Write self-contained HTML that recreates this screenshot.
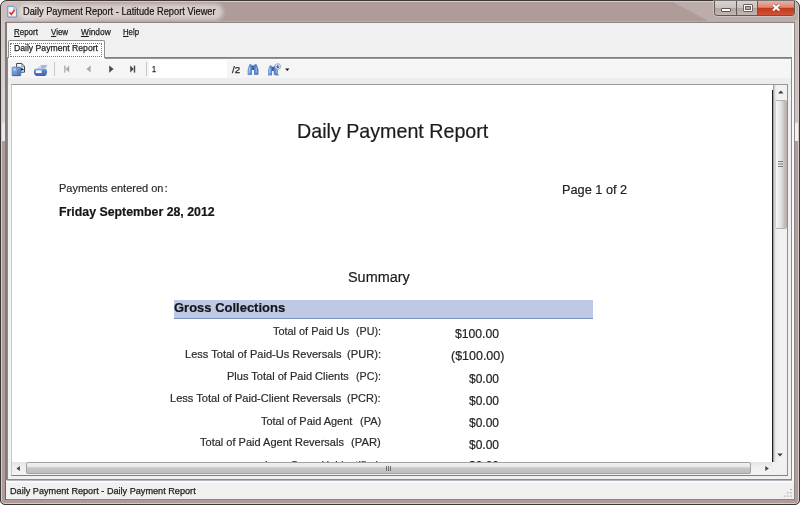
<!DOCTYPE html>
<html><head><meta charset="utf-8">
<style>
html,body{margin:0;padding:0;}
body{width:800px;height:505px;overflow:hidden;background:#fff;font-family:"Liberation Sans",sans-serif;position:relative;}
.abs{position:absolute;}
.t{position:absolute;white-space:pre;line-height:1;transform-origin:0 0;}
.ui{-webkit-text-stroke:.25px currentColor;filter:blur(.3px);}
.rp{-webkit-text-stroke:.2px currentColor;filter:blur(.3px);}
u{text-decoration:underline;text-underline-offset:1px;}
#frame{left:0;top:0;width:800px;height:505px;background:#af9c99;border-radius:7px 7px 5px 5px;overflow:hidden;}
#frameedge{left:0;top:0;width:798px;height:503px;border:1px solid #3c3836;border-radius:7px 7px 5px 5px;box-shadow:inset 0 0 0 1px #d6cbc8;}
#client{left:7px;top:23px;width:787px;height:476px;background:#f0f0f0;box-shadow:0 0 0 1px #8a8685,0 -1px 0 1px #b9aaa6;}
</style></head>
<body>
<div class="abs" id="frame">
  <svg class="abs" id="glass" style="left:0;top:0" width="800" height="23" viewBox="0 0 800 23"><path d="M669 0H800V23H712z" fill="#fff" fill-opacity=".17"/></svg>
  <div class="abs" style="left:0;top:0;width:70px;height:22px;background:linear-gradient(90deg,rgba(255,255,255,.38),rgba(255,255,255,.3) 35%,rgba(255,255,255,0));"></div>
  <div class="abs" id="glow" style="left:19px;top:3.500px;width:204px;height:16px;border-radius:8px;background:rgba(255,255,255,.5);filter:blur(2px);"></div>
</div>
<div class="abs" style="left:1px;top:20px;width:5px;height:121px;background:linear-gradient(#cfc6c4,#d8d4d3 60%,#d8d5d4 84%,#eaeaea 86%,#eaeaea);"></div>
<div class="abs" style="left:795px;top:20px;width:3px;height:121px;background:linear-gradient(#c8bcb9,#cdc3c0 84%,#f2f0f0 86%,#f2f0f0);"></div>
<div class="abs" id="frameedge"></div>

<!-- title icon -->
<svg class="abs" style="left:6px;top:4px" width="13" height="15" viewBox="0 0 13 15">
  <path d="M1.8 2.3h6l2.6 2.6v8.1h-8.6z" fill="#eef3fa" stroke="#6f8fc0" stroke-width="1"/>
  <path d="M7.6 2.5v2.6h2.6" fill="#cfdcf0" stroke="#8aa3cf" stroke-width=".6"/>
  <path d="M3.6 8.2l1.8 2.2l3.2-4.6" fill="none" stroke="#d8321c" stroke-width="1.6"/>
</svg>

<!-- caption buttons -->
<div class="abs" id="capbtns" style="left:714px;top:1px;width:79px;height:14px;border:1px solid #615856;border-top:none;border-radius:0 0 4px 4px;overflow:hidden;box-shadow:0 0 0 1px rgba(255,255,255,.3);">
  <div class="abs" style="left:0;top:0;width:21px;height:14px;background:linear-gradient(#dad2d0,#cbc1be 48%,#b3a5a1 52%,#c2b6b3);border-right:1px solid #615856;"></div>
  <div class="abs" style="left:22px;top:0;width:20px;height:14px;background:linear-gradient(#dad2d0,#cbc1be 48%,#b3a5a1 52%,#c2b6b3);border-right:1px solid #615856;"></div>
  <div class="abs" style="left:43px;top:0;width:37px;height:14px;background:linear-gradient(#e9b2a4,#dd8672 45%,#c6381b 52%,#cf5238 100%);"></div>
  <div class="abs" style="left:6px;top:7px;width:10px;height:4px;background:#fff;border:1px solid #5b5553;box-sizing:border-box;border-radius:1px;"></div>
  <div class="abs" style="left:28px;top:3px;width:10px;height:8px;border:1px solid #6b6563;background:#fff;box-sizing:border-box;border-radius:1px;"></div>
  <div class="abs" style="left:30px;top:5px;width:6px;height:4px;border:1px solid #6b6563;background:#b3a5a1;box-sizing:border-box;"></div>
  <svg class="abs" style="left:55px;top:1px" width="14" height="12" viewBox="0 0 14 12"><path d="M3 2.700l6.300 5.800M9.300 2.700l-6.300 5.800" stroke="#7a4a40" stroke-width="3.200" stroke-linecap="butt" opacity=".7"/><path d="M3 2.700l6.300 5.800M9.300 2.700l-6.300 5.800" stroke="#fff" stroke-width="2" stroke-linecap="butt"/></svg>
</div>

<div class="abs" id="client"></div>

<!-- tab -->
<div class="abs" style="left:8px;top:40px;width:97px;height:19px;background:#fff;border:1px solid #8e8e8e;border-bottom:none;border-radius:2px 2px 0 0;box-sizing:border-box;"></div>

<!-- tab page / toolbar -->
<div class="abs" style="left:792px;top:24px;width:2px;height:475px;background:#fafafa;"></div>
<div class="abs" style="left:7px;top:57px;width:784.5px;height:423px;border:1px solid #8a8a8a;background:#f0f0f0;box-sizing:border-box;"></div>
<div class="abs" style="left:105px;top:57px;width:686.5px;height:2px;background:linear-gradient(#808080,#808080 60%,#b9b9b9);"></div>
<div class="abs" style="left:8px;top:59px;width:783px;height:19px;background:linear-gradient(#fbfbfb,#f5f5f5 2px);"></div>
<div class="abs" style="left:9px;top:57px;width:95px;height:2px;background:#fff;"></div>
<div class="abs" style="left:8px;top:78px;width:783px;height:6px;background:#ededed;"></div>
<div class="abs" style="left:5px;top:22px;width:2px;height:458px;background:#827c7a;"></div>
<div class="abs" style="left:10px;top:43px;width:92px;height:14px;border:1px dotted #777;box-sizing:border-box;"></div>

<!-- toolbar items -->
<div class="abs" style="left:54px;top:62px;width:1px;height:14px;background:#c9c9c9;"></div>
<div class="abs" style="left:146px;top:62px;width:1px;height:14px;background:#c9c9c9;"></div>
<div class="abs" style="left:149px;top:60px;width:78px;height:18px;background:#fff;"></div>
<svg class="abs" style="left:60px;top:62px" width="80" height="14" viewBox="0 0 80 14">
  <g fill="#a9a9a9"><rect x="4.2" y="3.6" width="1.3" height="7"/><path d="M9.2 3.6v7l-3.6-3.5z"/>
  <path d="M30.6 3.6v7l-4.2-3.5z"/></g>
  <g fill="#4a4a4a"><path d="M49.2 3.4v7.4l4.4-3.7z"/>
  <path d="M70.2 3.6v7l3.6-3.5z"/><rect x="73.8" y="3.6" width="1.4" height="7"/></g>
</svg>
<!-- export icon -->
<svg class="abs" style="left:11px;top:61px" width="16" height="16" viewBox="0 0 16 16">
  <defs><linearGradient id="eg" x1="0" y1="0" x2="1" y2="1"><stop offset="0" stop-color="#a9c5ec"/><stop offset=".55" stop-color="#5f8bd0"/><stop offset="1" stop-color="#4370bd"/></linearGradient></defs>
  <path d="M5.6 2.5h5.2l2.7 2.7v6h-7.9z" fill="#fcfcfd" stroke="#454545" stroke-width="1"/>
  <path d="M10.6 2.7v2.7h2.7" fill="none" stroke="#777" stroke-width=".7"/>
  <rect x="10.2" y="4.6" width="2.6" height="1.9" fill="#7fb2e6"/>
  <rect x="10.6" y="9.2" width="2.2" height="1.5" fill="#9cc4ec"/>
  <path d="M9.6 6.7l3.7 1.6l-3.7 1.6z" fill="#1c1c1c"/>
  <rect x="1.1" y="6.1" width="8.7" height="8.7" rx=".8" fill="url(#eg)" stroke="#4673bf" stroke-width=".7"/>
  <rect x="4.2" y="8" width="1.3" height="5.6" fill="#9a93a6"/>
  <rect x="2.4" y="7.4" width="2.6" height="2.2" fill="#c4d7f2" opacity=".8"/>
  <rect x="1.1" y="13.9" width="8.7" height=".9" fill="#3c6bb9"/>
</svg>
<!-- printer icon -->
<svg class="abs" style="left:33px;top:62.5px" width="16" height="14" viewBox="0 0 16 14">
  <defs><linearGradient id="pg" x1="0" y1="0" x2="0" y2="1"><stop offset="0" stop-color="#9dbbe8"/><stop offset=".3" stop-color="#5b86cf"/><stop offset="1" stop-color="#3f69b9"/></linearGradient></defs>
  <path d="M4.6 5.6l3.4-3.2h6l-2.2 3.4z" fill="#e4ebf7" stroke="#9fb2d6" stroke-width=".6"/>
  <path d="M8.6 3.1h4.6M7.6 4.2h4.6" stroke="#7f93c9" stroke-width=".9"/>
  <rect x="1" y="5.6" width="13" height="6.6" rx="2.2" fill="url(#pg)"/>
  <rect x="2.9" y="7.3" width="5.7" height="2.7" rx=".5" fill="#f7f9fd"/>
  <rect x="9.9" y="6.4" width="1.6" height="1.8" fill="#2cc540"/>
  <rect x="9.9" y="8.3" width="1.6" height="1.4" fill="#d9402e"/>
  <path d="M2.6 12.4h10" stroke="#3a5cae" stroke-width="1.1"/>
</svg>
<!-- binoculars -->
<svg class="abs" style="left:246px;top:62px" width="14" height="14" viewBox="0 0 14 14">
  <defs><linearGradient id="bg1" x1="0" y1="0" x2="1" y2="0"><stop offset="0" stop-color="#7aa3dc"/><stop offset=".35" stop-color="#5a86cc"/><stop offset=".5" stop-color="#2b50ae"/><stop offset=".65" stop-color="#5a86cc"/><stop offset="1" stop-color="#4674c2"/></linearGradient></defs>
  <path d="M1.6 7.4l1.2-3.6q.3-1.8 1.6-1.8q1.4 0 1.6 1.6h2q.2-1.6 1.6-1.6q1.300 0 1.600 1.800l1.200 3.600v4.600h-4.400v-4h-2v4h-4.400z" fill="url(#bg1)"/>
  <rect x="3" y="5.2" width="1.300" height="5.600" fill="#b4cdef" opacity=".85"/>
  <rect x="9.600" y="5.200" width="1.300" height="5.600" fill="#a5c1ea" opacity=".8"/>
  <path d="M1.600 12.400h4.400M8 12.400h4.400" stroke="#3a62b0" stroke-width=".8"/>
</svg>
<svg class="abs" style="left:267px;top:62px" width="16" height="14" viewBox="0 0 16 14">
  <path d="M1 8l1-3q.3-1.700 1.500-1.700q1.300 0 1.500 1.500h1.800q.2-1.500 1.500-1.500q1.200 0 1.500 1.700l1 3v4.800h-4v-3.800h-1.800v3.800h-4z" fill="url(#bg1)"/>
  <rect x="2.200" y="6" width="1.200" height="5.400" fill="#b9d0f0" opacity=".85"/>
  <rect x="8.800" y="7" width="1.200" height="4.400" fill="#a8c3ea" opacity=".8"/>
  <path d="M1 12.900h4M7.800 12.900h4" stroke="#3a62b0" stroke-width=".8"/>
  <circle cx="10.800" cy="4.500" r="2.800" fill="#f0f4fb" stroke="#8d94a3" stroke-width=".8"/>
  <path d="M10.800 2.800v2.400M9.500 4.600l1.300 1.500l1.300-1.500" stroke="#2f55b4" stroke-width="1" fill="#2f55b4"/>
</svg>
<svg class="abs" style="left:284px;top:67px" width="7" height="5" viewBox="0 0 7 5"><path d="M1.200 1.400h4.200l-2.100 2.500z" fill="#111"/></svg>

<!-- report viewer -->
<div class="abs" id="viewer" style="left:11px;top:84px;width:777px;height:392px;border:1px solid;border-color:#9a9a9a #909090 #808080 #cdc5c3;background:#fff;box-sizing:border-box;"></div>
<!-- page right edge -->
<div class="abs" style="left:771.7px;top:90px;width:1.8px;height:372px;background:#1e1e1e;"></div>
<!-- gross band -->
<div class="abs" style="left:174px;top:300px;width:419px;height:18px;background:#becae5;"></div>
<div class="abs" style="left:174px;top:318px;width:419px;height:1px;background:#7d93bd;"></div>

<!-- status -->
<div class="abs" style="left:5px;top:480px;width:1px;height:20px;background:#6a6462;"></div>
<div class="abs" style="left:6px;top:480px;width:788px;height:19px;background:linear-gradient(#f0f0f0 1px,#fbfbfb 1px,#fbfbfb 2px,#f0f0f0 3px);"></div>
<div class="abs" style="left:7px;top:480px;width:785px;height:1px;background:#b4b8c0;"></div>

<div class="t rp" style="left:23.40px;top:6.54px;font-size:10.0px;font-weight:normal;color:#15110f;transform:scaleX(0.9272);">Daily Payment Report - Latitude Report Viewer</div>
<div class="t ui" style="left:14.10px;top:27.26px;font-size:9.5px;font-weight:normal;color:#1b1b1b;transform:scaleX(0.8381);"><u>R</u>eport</div>
<div class="t ui" style="left:51.20px;top:27.26px;font-size:9.5px;font-weight:normal;color:#1b1b1b;transform:scaleX(0.8366);"><u>V</u>iew</div>
<div class="t ui" style="left:80.60px;top:27.26px;font-size:9.5px;font-weight:normal;color:#1b1b1b;transform:scaleX(0.8783);"><u>W</u>indow</div>
<div class="t ui" style="left:123.20px;top:27.26px;font-size:9.5px;font-weight:normal;color:#1b1b1b;transform:scaleX(0.8154);"><u>H</u>elp</div>
<div class="t ui" style="left:13.80px;top:43.36px;font-size:9.5px;font-weight:normal;color:#1b1b1b;transform:scaleX(0.9088);">Daily Payment Report</div>
<div class="t ui" style="left:10.00px;top:486.36px;font-size:9.5px;font-weight:normal;color:#1b1b1b;transform:scaleX(0.9608);">Daily Payment Report - Daily Payment Report</div>
<div class="t ui" style="left:151.50px;top:64.26px;font-size:9.5px;font-weight:normal;color:#1b1b1b;transform:scaleX(0.7600);">1</div>
<div class="t ui" style="left:231.50px;top:64.76px;font-size:9.5px;font-weight:normal;color:#1b1b1b;transform:scaleX(1.0341);">/2</div>
<div class="t rp" style="left:297.01px;top:121.84px;font-size:19.8px;font-weight:normal;color:#1c1c1c;transform:scaleX(0.9943);">Daily Payment Report</div>
<div class="t rp" style="left:59.00px;top:181.78px;font-size:11.6px;font-weight:normal;color:#2a2a2a;transform:scaleX(0.9475);">Payments entered on</div>
<div class="t rp" style="left:164.40px;top:181.78px;font-size:11.6px;font-weight:normal;color:#2a2a2a;transform:scaleX(1.0000);">:</div>
<div class="t rp" style="left:59.00px;top:206.25px;font-size:12.7px;font-weight:bold;color:#151515;transform:scaleX(0.9723);">Friday September 28, 2012</div>
<div class="t rp" style="left:561.86px;top:182.89px;font-size:13.6px;font-weight:normal;color:#222;transform:scaleX(0.9371);">Page 1 of 2</div>
<div class="t rp" style="left:348.00px;top:270.16px;font-size:14.7px;font-weight:normal;color:#1c1c1c;transform:scaleX(0.9812);">Summary</div>
<div class="t rp" style="left:173.70px;top:301.43px;font-size:13.2px;font-weight:bold;color:#151515;transform:scaleX(0.9847);">Gross Collections</div>
<div class="t rp" style="left:273.40px;top:326.45px;font-size:11.4px;font-weight:normal;color:#2a2a2a;transform:scaleX(0.9566);">Total of Paid Us</div>
<div class="t rp" style="left:355.70px;top:326.45px;font-size:11.4px;font-weight:normal;color:#2a2a2a;transform:scaleX(0.9428);">(PU):</div>
<div class="t rp" style="left:185.30px;top:348.75px;font-size:11.4px;font-weight:normal;color:#2a2a2a;transform:scaleX(0.9701);">Less Total of Paid-Us Reversals</div>
<div class="t rp" style="left:346.70px;top:348.75px;font-size:11.4px;font-weight:normal;color:#2a2a2a;transform:scaleX(0.9788);">(PUR):</div>
<div class="t rp" style="left:227.40px;top:370.95px;font-size:11.4px;font-weight:normal;color:#2a2a2a;transform:scaleX(0.9684);">Plus Total of Paid Clients</div>
<div class="t rp" style="left:355.80px;top:370.95px;font-size:11.4px;font-weight:normal;color:#2a2a2a;transform:scaleX(0.9390);">(PC):</div>
<div class="t rp" style="left:170.40px;top:393.25px;font-size:11.4px;font-weight:normal;color:#2a2a2a;transform:scaleX(0.9710);">Less Total of Paid-Client Reversals</div>
<div class="t rp" style="left:347.10px;top:393.25px;font-size:11.4px;font-weight:normal;color:#2a2a2a;transform:scaleX(0.9672);">(PCR):</div>
<div class="t rp" style="left:261.30px;top:416.25px;font-size:11.4px;font-weight:normal;color:#2a2a2a;transform:scaleX(0.9611);">Total of Paid Agent</div>
<div class="t rp" style="left:359.80px;top:416.25px;font-size:11.4px;font-weight:normal;color:#2a2a2a;transform:scaleX(0.9620);">(PA)</div>
<div class="t rp" style="left:200.20px;top:437.15px;font-size:11.4px;font-weight:normal;color:#2a2a2a;transform:scaleX(0.9671);">Total of Paid Agent Reversals</div>
<div class="t rp" style="left:351.10px;top:437.15px;font-size:11.4px;font-weight:normal;color:#2a2a2a;transform:scaleX(0.9879);">(PAR)</div>
<div class="t rp" style="left:264.50px;top:459.85px;font-size:11.4px;font-weight:normal;color:#2a2a2a;transform:scaleX(0.9280);">Less Gross UnIdentified</div>
<div class="t rp" style="left:454.80px;top:327.53px;font-size:12.6px;font-weight:normal;color:#222;transform:scaleX(0.9666);">$100.00</div>
<div class="t rp" style="left:450.70px;top:350.23px;font-size:12.6px;font-weight:normal;color:#222;transform:scaleX(0.9904);">($100.00)</div>
<div class="t rp" style="left:468.80px;top:372.53px;font-size:12.6px;font-weight:normal;color:#222;transform:scaleX(0.9520);">$0.00</div>
<div class="t rp" style="left:468.80px;top:394.63px;font-size:12.6px;font-weight:normal;color:#222;transform:scaleX(0.9520);">$0.00</div>
<div class="t rp" style="left:468.80px;top:416.83px;font-size:12.6px;font-weight:normal;color:#222;transform:scaleX(0.9520);">$0.00</div>
<div class="t rp" style="left:468.80px;top:438.53px;font-size:12.6px;font-weight:normal;color:#222;transform:scaleX(0.9520);">$0.00</div>
<div class="t rp" style="left:468.80px;top:459.83px;font-size:12.6px;font-weight:normal;color:#222;transform:scaleX(0.9520);">$0.00</div>

<!-- vertical scrollbar -->
<div class="abs" style="left:773.2px;top:85px;width:13.8px;height:377px;background:linear-gradient(90deg,#8e8e8e,#dedede 1.8px,#ededed 3px,#f2f2f2 40%,#f0f0f0);"></div>
<div class="abs" style="left:775px;top:100px;width:11.5px;height:129px;box-sizing:border-box;border:1px solid #b5aeac;border-left-color:#d0d0d0;border-radius:2px;background:linear-gradient(90deg,#f6f6f6 0%,#e6e6e6 40%,#d4d2d2 68%,#c7bdba 80%,#c4b8b5 100%);"></div>
<div class="abs" style="left:777.5px;top:161px;width:5px;height:1px;background:#7c7c7c;box-shadow:0 2.5px 0 #7c7c7c,0 5px 0 #7c7c7c;"></div>
<svg class="abs" style="left:777px;top:89px" width="8" height="6" viewBox="0 0 8 6"><path d="M1.1 4.6l2.7-3l2.7 3z" fill="#3c3c3c"/></svg>
<svg class="abs" style="left:776px;top:452px" width="8" height="6" viewBox="0 0 8 6"><path d="M1.3 1.6l2.7 3l2.7-3z" fill="#3c3c3c"/></svg>

<!-- horizontal scrollbar -->
<div class="abs" style="left:12px;top:462px;width:775px;height:13px;background:linear-gradient(#e4e4e4,#f0f0f0 40%,#f2f2f2);"></div>
<div class="abs" style="left:26px;top:462px;width:725px;height:12px;box-sizing:border-box;border:1px solid #a2a2a2;border-radius:2px;background:linear-gradient(#f0f0f0 0%,#e6e6e6 40%,#c6c6c6 48%,#bfbfbf 100%);"></div>
<div class="abs" style="left:386px;top:466px;width:1px;height:5px;background:#6e6e6e;box-shadow:2px 0 0 #6e6e6e,4px 0 0 #6e6e6e;"></div>
<svg class="abs" style="left:15px;top:464px" width="6" height="9" viewBox="0 0 6 9"><path d="M4.9 1.9v5l-3.5-2.5z" fill="#444"/></svg>
<svg class="abs" style="left:764px;top:464px" width="6" height="9" viewBox="0 0 6 9"><path d="M1.3 1.9v5l3.5-2.5z" fill="#444"/></svg>
<div class="abs" style="left:772px;top:462px;width:15px;height:13px;background:#f0f0f0;"></div>

<!-- resize grip -->
<div class="abs" style="left:790px;top:488.6px;width:1.6px;height:1.6px;background:#b9afae;box-shadow:0 3.3px 0 #b9afae,-3.2px 3.3px 0 #b9afae,0 6.6px 0 #b9afae,-3.2px 6.6px 0 #b9afae,-6.4px 6.6px 0 #b9afae;"></div>
</body></html>
